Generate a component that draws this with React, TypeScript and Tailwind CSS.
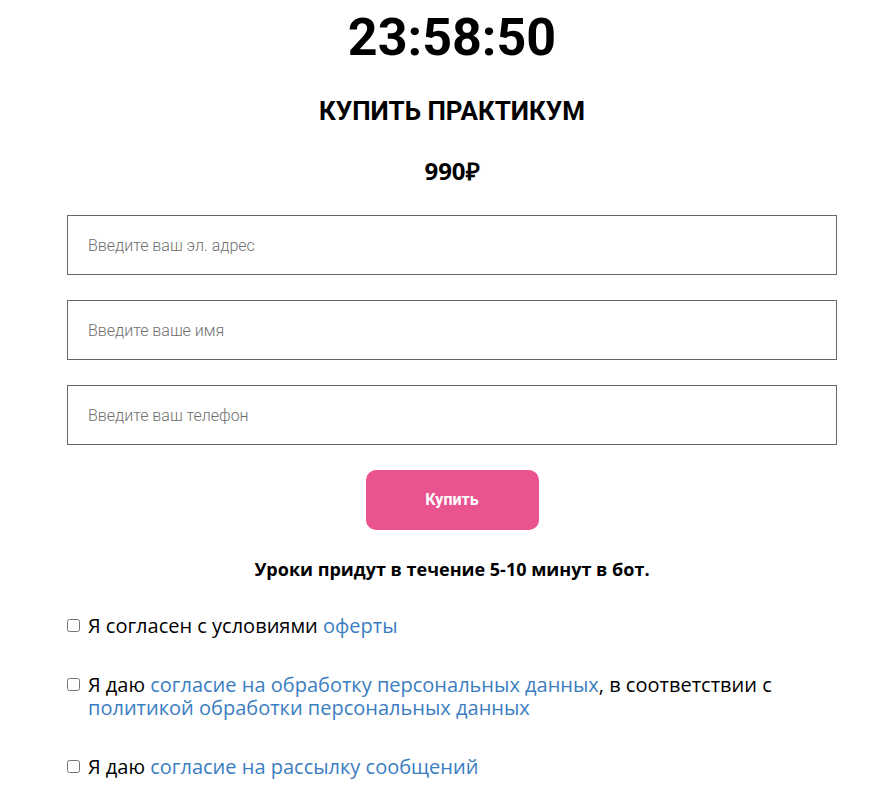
import { useState } from "react";

const fields = [
  "Введите ваш эл. адрес",
  "Введите ваше имя",
  "Введите ваш телефон",
];

export default function App() {
  const [agree, setAgree] = useState([false, false, false]);

  const toggle = (i: number) =>
    setAgree((prev) => prev.map((v, j) => (j === i ? !v : v)));

  return (
    <div className="min-h-screen bg-white pl-[67px] pr-[56px] font-['Open_Sans',sans-serif] text-black">
      <div className="w-[770px]">
        {/* Timer */}
        <div className="pt-[6px] text-center font-['Roboto',sans-serif] text-[52px] font-bold leading-[64px]">
          23:58:50
        </div>

        <h2 className="mt-[26px] text-center font-['Roboto',sans-serif] text-[26px] font-bold leading-[30px]">
          КУПИТЬ ПРАКТИКУМ
        </h2>

        <div className="mt-[30px] text-center text-[24px] font-bold leading-[30px]">
          990₽
        </div>

        {/* Form */}
        <form className="mt-[29px] flex flex-col gap-[25px]">
          {fields.map((f) => (
            <input
              key={f}
              type="text"
              placeholder={f}
              className="h-[60px] w-full border border-[#666] px-[20px] font-['Roboto',sans-serif] text-[16px] font-light text-black outline-none placeholder:text-[#6f6f6f]"
            />
          ))}
          <div className="flex justify-center">
            <button
              type="button"
              className="h-[60px] w-[173px] rounded-[10px] bg-[#e85390] font-['Roboto',sans-serif] text-[16px] font-bold text-white"
            >
              Купить
            </button>
          </div>
        </form>

        <p className="mt-[27px] text-center text-[18px] font-bold leading-[24px]">
          Уроки придут в течение 5-10 минут в бот.
        </p>

        {/* Agreements */}
        <div className="mt-[33px] flex flex-col gap-[36px] text-[20px] leading-[23px]">
          <label className="flex items-start">
            <input
              type="checkbox"
              checked={agree[0]}
              onChange={() => toggle(0)}
              className="mr-[8px] mt-[5px] h-[13px] w-[13px] shrink-0"
            />
            <span>
              Я согласен с условиями{" "}
              <a href="#" className="text-[#3b7dc1]">оферты</a>
            </span>
          </label>
          <label className="flex items-start">
            <input
              type="checkbox"
              checked={agree[1]}
              onChange={() => toggle(1)}
              className="mr-[8px] mt-[5px] h-[13px] w-[13px] shrink-0"
            />
            <span>
              Я даю{" "}
              <a href="#" className="text-[#3b7dc1]">
                согласие на обработку персональных данных
              </a>
              , в соответствии с{" "}
              <a href="#" className="text-[#3b7dc1]">
                политикой обработки персональных данных
              </a>
            </span>
          </label>
          <label className="flex items-start">
            <input
              type="checkbox"
              checked={agree[2]}
              onChange={() => toggle(2)}
              className="mr-[8px] mt-[5px] h-[13px] w-[13px] shrink-0"
            />
            <span>
              Я даю{" "}
              <a href="#" className="text-[#3b7dc1]">
                согласие на рассылку сообщений
              </a>
            </span>
          </label>
        </div>
      </div>
    </div>
  );
}
